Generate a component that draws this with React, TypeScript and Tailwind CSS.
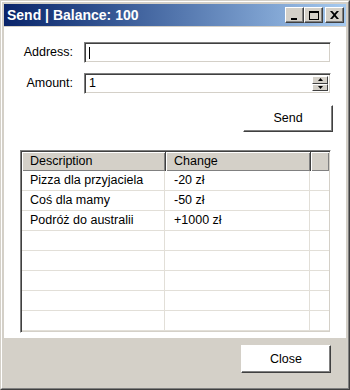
import React from "react";

const font = { fontFamily: '"Liberation Sans", Arial, sans-serif' };

function TitleBtn({ children, className = "" }: { children: React.ReactNode; className?: string }) {
  return (
    <div
      className={`w-[19px] h-[16px] bg-[#d4d0c8] border border-t-white border-l-white border-r-[#404040] border-b-[#404040] shadow-[inset_-1px_-1px_0_#808080] flex items-center justify-center ${className}`}
    >
      {children}
    </div>
  );
}

function Row({ a = "", b = "" }: { a?: string; b?: string }) {
  return (
    <div className="flex h-[20px] border-b border-[#e2dfd8] shrink-0">
      <div className="w-[143px] border-r border-[#e2dfd8] pl-[8px] flex items-center whitespace-nowrap">{a}</div>
      <div className="w-[145px] border-r border-[#e2dfd8] pl-[9px] flex items-center whitespace-nowrap">{b}</div>
      <div className="flex-1" />
    </div>
  );
}

export default function App() {
  return (
    <div style={font} className="w-[350px] h-[390px] bg-[#d4d0c8] border border-t-[#d4d0c8] border-l-[#d4d0c8] border-r-[#404040] border-b-[#404040] text-[12.5px] text-black overflow-hidden">
      <div className="w-full h-full border border-t-white border-l-white border-r-[#808080] border-b-[#808080] p-[2px] flex flex-col">
        {/* title bar */}
        <div className="h-[22px] shrink-0 bg-gradient-to-r from-[#0a246a] to-[#a6caf0] flex items-center pl-[3px] pr-[2px]">
          <span className="text-white font-bold text-[14px] leading-none whitespace-nowrap">Send | Balance: 100</span>
          <div className="flex-1" />
          <div className="flex items-center">
            <TitleBtn>
              <svg width="9" height="9" viewBox="0 0 9 9"><rect x="1" y="7" width="6" height="2" fill="#000" /></svg>
            </TitleBtn>
            <TitleBtn>
              <svg width="10" height="9" viewBox="0 0 10 9"><rect x="0.5" y="0.5" width="9" height="8" fill="none" stroke="#000" /><rect x="0" y="0" width="10" height="2" fill="#000" /></svg>
            </TitleBtn>
            <TitleBtn className="ml-[2px]">
              <svg width="9" height="8" viewBox="0 0 8 7">
                <path d="M0 0h2l2 2.2L6 0h2L5 3.5 8 7H6L4 4.8 2 7H0l3-3.5z" fill="#000" />
              </svg>
            </TitleBtn>
          </div>
        </div>

        {/* client */}
        <div className="mt-[1px] flex-1 flex flex-col">
          <div className="bg-white h-[311px] shrink-0 flex flex-col pl-[16px] pr-[15px] pt-[15px] pb-[5px]">
            <div className="grid grid-cols-[53px_1fr] gap-x-[11px] gap-y-[10px]">
              <div className="text-right flex items-center justify-end h-[21px]">Address:</div>
              <div className="h-[21px] border border-t-[#808080] border-l-[#808080] border-r-white border-b-white shadow-[inset_1px_1px_0_#404040,inset_-1px_-1px_0_#d4d0c8] relative">
                <div className="absolute left-[4px] top-[4px] w-[1px] h-[12px] bg-black" />
              </div>
              <div className="text-right flex items-center justify-end h-[21px]">Amount:</div>
              <div className="h-[21px] border border-t-[#808080] border-l-[#808080] border-r-white border-b-white shadow-[inset_1px_1px_0_#404040,inset_-1px_-1px_0_#d4d0c8] flex items-center pl-[4px] pr-[2px] py-[2px]">
                <span className="flex-1">1</span>
                <div className="w-[16px] h-full flex flex-col">
                  <div className="flex-1 bg-[#d4d0c8] border border-t-white border-l-white border-r-[#404040] border-b-[#404040] flex items-center justify-center">
                    <svg width="5" height="3" viewBox="0 0 5 3"><path d="M2.5 0L5 3H0z" fill="#000" /></svg>
                  </div>
                  <div className="flex-1 bg-[#d4d0c8] border border-t-white border-l-white border-r-[#404040] border-b-[#404040] flex items-center justify-center">
                    <svg width="5" height="3" viewBox="0 0 5 3"><path d="M0 0h5L2.5 3z" fill="#000" /></svg>
                  </div>
                </div>
              </div>
            </div>
            <div className="flex justify-end mt-[11px] mr-[-2px]">
              <div className="w-[90px] h-[27px] bg-white border border-t-white border-l-white border-r-[#404040] border-b-[#404040] shadow-[inset_-1px_-1px_0_#808080] flex items-center justify-center">
                Send
              </div>
            </div>
            {/* table */}
            <div className="mt-[18px] flex-1 border border-t-[#808080] border-l-[#808080] border-r-white border-b-white shadow-[inset_1px_1px_0_#404040,inset_-1px_-1px_0_#d4d0c8] p-[1px] overflow-hidden">
              <div className="flex flex-col h-full overflow-hidden bg-white">
                <div className="flex h-[19px] shrink-0 bg-[#d4d0c8]">
                  <div className="w-[144px] pl-[8px] flex items-center bg-[#d4d0c8] shadow-[inset_1px_1px_0_#fff,inset_-1px_-1px_0_#808080] border-r border-[#404040]">Description</div>
                  <div className="w-[145px] pl-[8px] flex items-center bg-[#d4d0c8] shadow-[inset_1px_1px_0_#fff,inset_-1px_-1px_0_#808080] border-r border-[#404040]">Change</div>
                  <div className="flex-1 bg-[#d4d0c8] shadow-[inset_1px_1px_0_#fff,inset_-1px_-1px_0_#808080]" />
                </div>
                <Row a="Pizza dla przyjaciela" b="-20 zł" />
                <Row a="Coś dla mamy" b="-50 zł" />
                <Row a="Podróż do australii" b="+1000 zł" />
                <Row />
                <Row />
                <Row />
                <Row />
                <Row />
                <Row />
              </div>
            </div>
          </div>
          <div className="flex-1 flex justify-end items-start pt-[7px] pr-[15px]">
            <div className="w-[90px] h-[28px] bg-white border border-t-white border-l-white border-r-[#404040] border-b-[#404040] shadow-[inset_-1px_-1px_0_#808080] flex items-center justify-center">
              Close
            </div>
          </div>
        </div>
      </div>
    </div>
  );
}
